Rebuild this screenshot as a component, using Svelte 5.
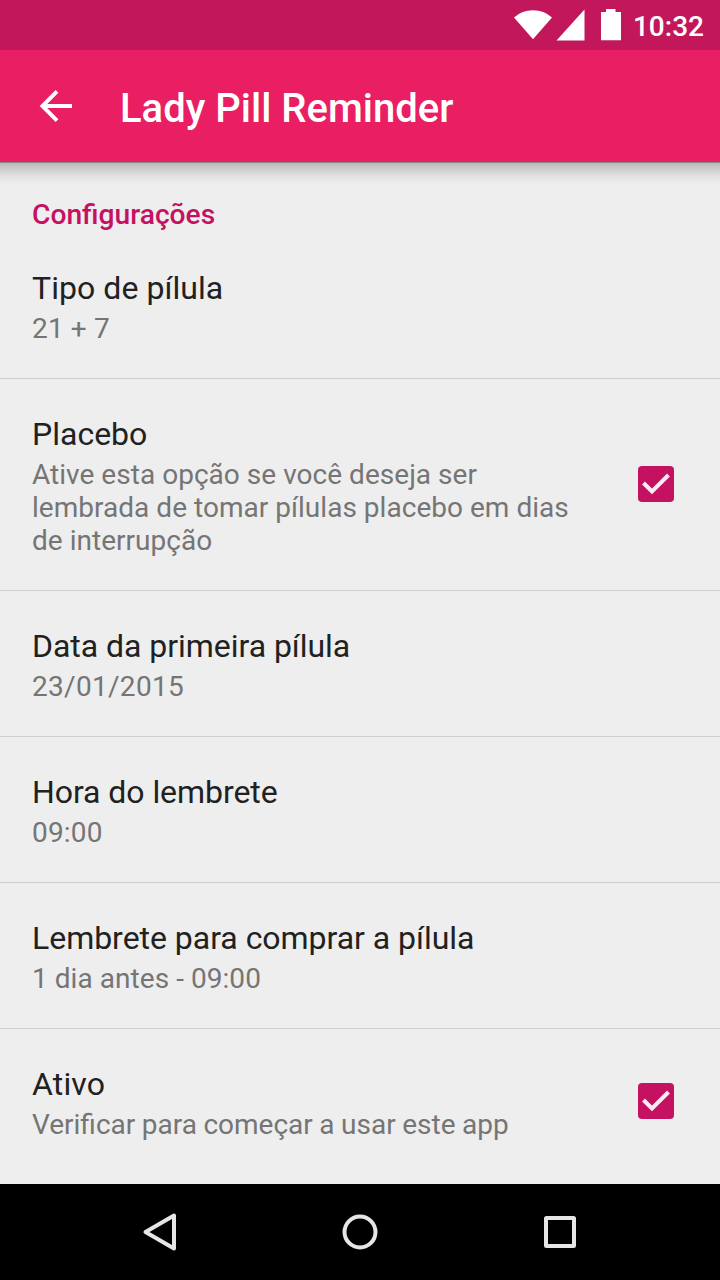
<script>
  // `tracking` fine-tunes letter spacing (px) of a summary line
  const items = [
    { title: 'Tipo de pílula', titleTracking: 0.06, summary: ['21 + 7'], tracking: 0.15 },
    {
      title: 'Placebo',
      summary: ['Ative esta opção se você deseja ser', 'lembrada de tomar pílulas placebo em dias', 'de interrupção'],
      tracking: 0.03,
      checked: true
    },
    { title: 'Data da primeira pílula', titleTracking: -0.04, summary: ['23/01/2015'], tracking: 0.3 },
    { title: 'Hora do lembrete', titleTracking: -0.06, summary: ['09:00'], tracking: 0.2 },
    { title: 'Lembrete para comprar a pílula', titleTracking: -0.03, summary: ['1 dia antes - 09:00'], tracking: 0.05 },
    { title: 'Ativo', titleTracking: 0.15, summary: ['Verificar para começar a usar este app'], wordSpacing: -0.42, checked: true }
  ];
  const spacing = (v) => (v ? `${v}px` : 'normal');
</script>

<div class="screen">
  <div class="status">
    <svg width="108" height="50" viewBox="514 0 108 50" fill="#fff" aria-hidden="true">
      <path d="M514 17.500Q522 10.300 533 10.300T552 17.500L533 39.300Z" />
      <path d="M584.500 9.500V40.500H556.500Z" />
      <path d="M606 9h9.500v3h5.500v28.300h-20V12h5Z" />
    </svg>
    <span class="clock">10:32</span>
  </div>
  <header>
    <svg width="34" height="34" viewBox="0 0 34 34" fill="none" stroke="#fff" stroke-width="3.900" aria-label="Voltar">
      <path d="M18 2.400L3.400 17L18 31.600M3.400 17H33" />
    </svg>
    <h1>Lady Pill Reminder</h1>
  </header>
  <main>
    <h2>Configurações</h2>
    {#each items as item}
      <section>
        <div class="text">
          <h3 style:letter-spacing={spacing(item.titleTracking)}>{item.title}</h3>
          <p style:letter-spacing={spacing(item.tracking)} style:word-spacing={spacing(item.wordSpacing)}>
            {#each item.summary as line}<span>{line}</span>{/each}
          </p>
        </div>
        {#if item.checked}
          <svg class="check" width="36" height="36" viewBox="0 0 36 36" role="img" aria-label="Marcado">
            <rect width="36" height="36" rx="4" fill="#c51162" />
            <path d="M5.500 17L14 25.500L30.500 9" fill="none" stroke="#f9edf3" stroke-width="4" />
          </svg>
        {/if}
      </section>
    {/each}
  </main>
  <nav>
    <svg width="40" height="40" viewBox="0 0 40 40"><path d="M34 3.500V36.500L5.500 20Z" /></svg>
    <svg width="40" height="40" viewBox="0 0 40 40"><circle cx="20" cy="20" r="15.500" /></svg>
    <svg width="40" height="40" viewBox="0 0 40 40"><rect x="6" y="6" width="28" height="28" rx=".5" /></svg>
  </nav>
</div>

<style>
  :global(body) { margin: 0; }
  .screen {
    width: 720px;
    height: 1280px;
    display: flex;
    flex-direction: column;
    overflow: hidden;
    background: #eeeeee;
    font-family: Roboto, sans-serif;
  }
  .status {
    height: 50px;
    flex: none;
    box-sizing: border-box;
    padding-right: 16px;
    display: flex;
    justify-content: flex-end;
    align-items: center;
    gap: 11px;
    background: #c2185b;
    color: #fff;
  }
  .clock { font-size: 28px; font-weight: 500; line-height: 34px; padding-top: 4px; }
  header {
    height: 112px;
    flex: none;
    box-sizing: border-box;
    padding-left: 39px;
    display: flex;
    align-items: center;
    gap: 47px;
    background: #e91e63;
    color: #fff;
  }
  h1, h2, h3, p { margin: 0; }
  h1 { font-size: 40px; font-weight: 500; line-height: 48px; padding-top: 6px; }
  main {
    flex: 1;
    min-height: 0;
    background: linear-gradient(#858585 0, #858585 1px, #bababa 1px, #cccccc 7px, #e2e2e2 14px, #eeeeee 22px);
  }
  h2 {
    height: 71px;
    box-sizing: border-box;
    padding: 36px 32px 0;
    font-size: 28.200px;
    line-height: 33px;
    font-weight: 500;
    color: #c51162;
  }
  section {
    display: flex;
    align-items: center;
    justify-content: space-between;
    padding: 0 46px 0 32px;
    border-bottom: 1px solid #cecece;
  }
  section:last-child { border-bottom: 0; }
  .text { padding: 36px 0 33px; }
  h3 { font-size: 32px; line-height: 38px; font-weight: 400; color: #212121; white-space: nowrap; }
  p { margin-top: 5px; font-size: 28px; line-height: 33px; color: #757575; }
  p span { display: block; white-space: nowrap; }
  .check { flex: none; margin-bottom: 2px; }
  nav {
    height: 96px;
    flex: none;
    box-sizing: border-box;
    padding: 0 140px;
    display: flex;
    align-items: center;
    justify-content: space-between;
    background: #000;
  }
  nav svg { fill: none; stroke: #e6e6e6; stroke-width: 4; stroke-linejoin: round; }
</style>
